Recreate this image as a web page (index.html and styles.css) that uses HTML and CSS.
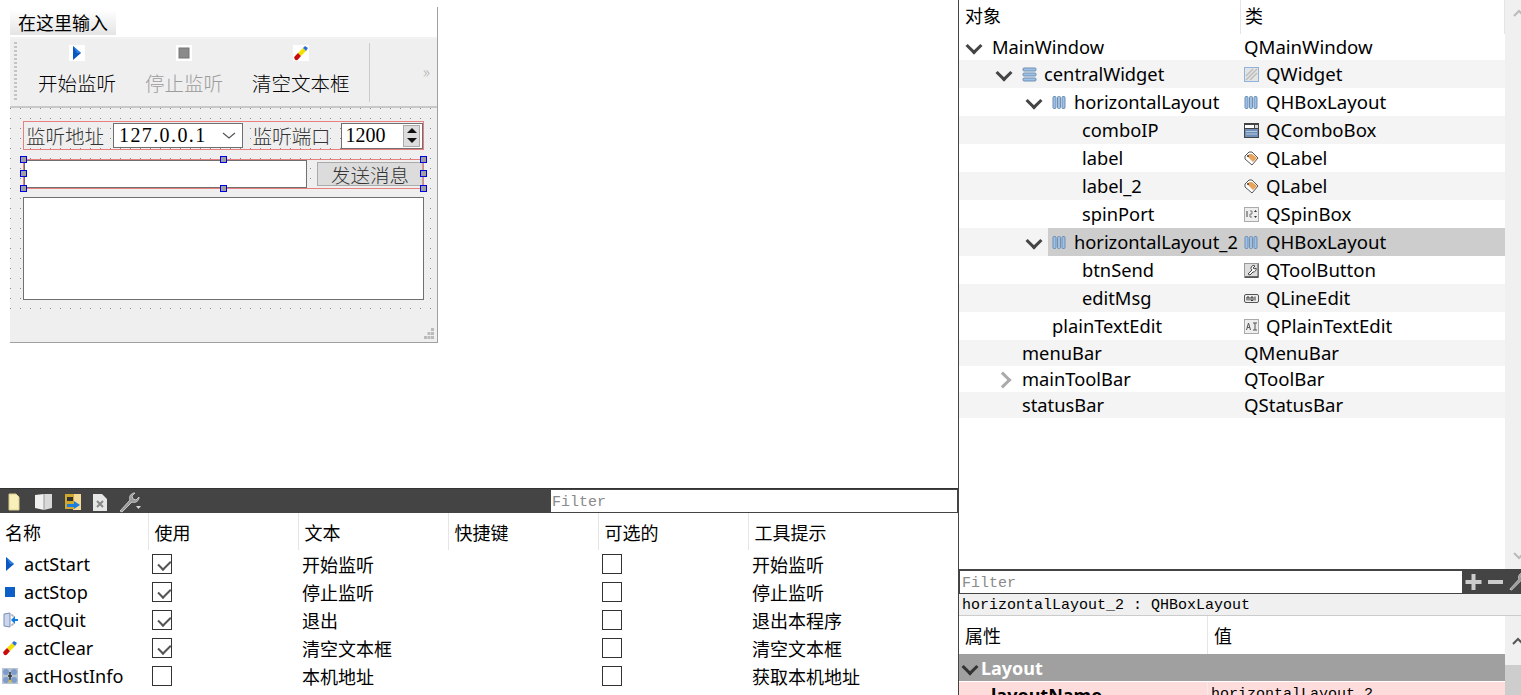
FILE: index.html
```html
<!DOCTYPE html>
<html lang="zh-CN">
<head>
    <meta charset="UTF-8">
    <title>Qt Designer</title>
    <link rel="stylesheet" href="styles.css">
</head>
<body>

<svg class="defs" width="0" height="0">
    <symbol id="i-play" viewBox="0 0 16 16"><path d="M4 1l8 7-8 7z" fill="#0b57c0"/><path d="M4 1l8 7-4 0z" fill="#2f7fe0"/></symbol>
    <symbol id="i-stop" viewBox="0 0 16 16"><rect x="3" y="3" width="10" height="10" fill="#8a8a8a" stroke="#777"/></symbol>
    <symbol id="i-stopblue" viewBox="0 0 16 16"><rect x="3" y="3" width="10" height="10" fill="#0c5fc6"/></symbol>
    <symbol id="i-eraser" viewBox="0 0 16 16"><path d="M5 8l5-5 3 3-5 5z" fill="#f2e000"/><path d="M10 3l2-2 3 2-2 3z" fill="#2f6fd8"/><path d="M2 11l3-3 3 3-3 3.500a2 2 0 0 1-3-3.500z" fill="#c80c0c"/></symbol>
    <symbol id="i-quit" viewBox="0 0 16 16"><path d="M2 2l6-1v14l-6-1z" fill="#c9d6ee" stroke="#7c8cb4"/><path d="M9 3h2v2M9 13h2v-2" fill="none" stroke="#999"/><path d="M16 7h-3V4l-4 4 4 4V9h3z" fill="#0f7ae0"/></symbol>
    <symbol id="i-host" viewBox="0 0 16 16"><rect width="16" height="16" fill="#b9c4d2"/><circle cx="4" cy="4" r="3" fill="#7d9ccc"/><circle cx="12" cy="4" r="3" fill="#7d9ccc"/><circle cx="4" cy="12" r="3" fill="#7d9ccc"/><circle cx="12" cy="12" r="3" fill="#7d9ccc"/><path d="M8 4v9M6 8h4" stroke="#333" stroke-width="1.500"/><circle cx="8" cy="13" r="1.500" fill="#d9b93a"/></symbol>
    <symbol id="i-hbox" viewBox="0 0 15 15"><g fill="#9dc0e6" stroke="#6f8fb2"><rect x="1" y="1.500" width="3" height="12" rx="1"/><rect x="5.500" y="1.500" width="3" height="12" rx="1"/><rect x="10" y="1.500" width="3" height="12" rx="1"/></g></symbol>
    <symbol id="i-vbox" viewBox="0 0 15 15"><g fill="#9dc0e6" stroke="#6f8fb2"><rect x="1" y="1" width="13" height="3" rx="1"/><rect x="1" y="6" width="13" height="3" rx="1"/><rect x="1" y="11" width="13" height="3" rx="1"/></g></symbol>
    <symbol id="i-widget" viewBox="0 0 15 15"><rect x=".5" y=".5" width="14" height="14" fill="#e4e4e4" stroke="#8fb4dc"/><path d="M2 9l7-7M2 13l11-11M6 13l7-7" stroke="#bdbdbd" stroke-width="1.500"/></symbol>
    <symbol id="i-combo" viewBox="0 0 15 15"><rect width="15" height="15" fill="#444"/><rect x="1" y="2" width="9" height="3" fill="#fff"/><rect x="11" y="2" width="3" height="3" fill="#ddd"/><rect x="1" y="6" width="13" height="8" fill="#6f8fb8"/><path d="M2 8.500h11M2 11h11" stroke="#b8c9e0"/></symbol>
    <symbol id="i-label" viewBox="0 0 15 15"><path d="M1 5l4-4h3l6 6-6 7-7-6z" fill="#fff" stroke="#555"/><path d="M5 3h3l5 4-4 4-5-5z" fill="#e8a35c"/><circle cx="4" cy="5" r="1" fill="#333"/></symbol>
    <symbol id="i-spin" viewBox="0 0 15 15"><rect x=".5" y=".5" width="14" height="14" fill="#eee" stroke="#aaa"/><path d="M3 4v6" stroke="#444"/><path d="M6 4h2v3H6v3h2" fill="none" stroke="#777"/><path d="M10 5l1.500-2L13 5zM10 9l1.500 2L13 9z" fill="#333"/></symbol>
    <symbol id="i-toolbtn" viewBox="0 0 15 15"><rect x=".5" y=".5" width="14" height="14" fill="#ddd" stroke="#999"/><path d="M13 14h1V1" stroke="#555" fill="none"/><path d="M1 14h13" stroke="#444" stroke-width="1.500"/><path d="M4 11l4-4a2.500 2.500 0 0 1 3-4L9 5l2 1 1-1a3 3 0 0 1-3 4l-3 3z" fill="#fff" stroke="#444"/></symbol>
    <symbol id="i-line" viewBox="0 0 15 15"><rect x=".5" y="3.500" width="14" height="8" rx="1.500" fill="#eee" stroke="#555"/><path d="M3 9.500V6h2v3.500M7 6v3.500h2V6H7M11 5.500v4" stroke="#333" fill="none"/></symbol>
    <symbol id="i-plain" viewBox="0 0 15 15"><rect x=".5" y=".5" width="14" height="14" fill="#eee" stroke="#aaa"/><path d="M2.500 11l2-7 2 7M3.300 8.500h2.500M9 4h4M11 4v7M9 11h4" stroke="#555" fill="none"/></symbol>
    <symbol id="i-wrench" viewBox="0 0 22 22"><path d="M2 20l10-11a5 5 0 0 1 5-7l-3 3 1 3 3 1 3-3a5 5 0 0 1-7 5L4 21z" fill="#999" stroke="#ddd" stroke-width=".8"/></symbol>
</svg>

<div class="left">
    <div class="canvas">
        <div class="form">
            <div class="menubar"><span class="menu-item">在这里输入</span></div>
            <div class="toolbar">
                <span class="grip"></span>
                <div class="tool"><svg class="tool-icon"><use href="#i-play"/></svg><span>开始监听</span></div>
                <div class="tool off"><svg class="tool-icon"><use href="#i-stop"/></svg><span>停止监听</span></div>
                <div class="tool"><svg class="tool-icon"><use href="#i-eraser"/></svg><span>清空文本框</span></div>
                <span class="tool-sep"></span>
                <span class="more">»</span>
            </div>
            <div class="central">
                <div class="lay-row">
                    <span class="lbl">监听地址</span>
                    <div class="combo"><span>127.0.0.1</span><svg width="14" height="8" viewBox="0 0 14 8"><path d="M1 1l6 5 6-5" fill="none" stroke="#555" stroke-width="1.200"/></svg></div>
                    <span class="lbl lbl2">监听端口</span>
                    <div class="spin">
                        <span>1200</span>
                        <div class="spin-btns"><i class="up"></i><i class="down"></i></div>
                    </div>
                </div>
                <div class="lay-row second">
                    <div class="edit"></div>
                    <div class="send">发送消息</div>
                    <i class="h h-tl"></i><i class="h h-tc"></i><i class="h h-tr"></i>
                    <i class="h h-ml"></i><i class="h h-mr"></i>
                    <i class="h h-bl"></i><i class="h h-bc"></i><i class="h h-br"></i>
                </div>
                <div class="plain"></div>
            </div>
            <svg class="size-grip" width="10" height="12" viewBox="0 0 10 12"><path d="M7 0h3v3H7zM3.500 4h3v3h-3zM7 4h3v3H7zM0 8h3v3H0zM3.500 8h3v3h-3zM7 8h3v3H7z" fill="#bbb"/></svg>
        </div>
    </div>

    <div class="actions">
        <div class="act-bar">
            <div class="act-tools">
                <svg class="bt" width="14" height="20" viewBox="0 0 14 20"><path d="M2 2h7l3 3v13H2z" fill="#f8f0b8" stroke="#d8cc90"/></svg>
                <svg class="bt" width="20" height="20" viewBox="0 0 20 20"><path d="M10 2h8v14l-8 2z" fill="#d8d8d8"/><path d="M1 3l9-1v16l-9-2z" fill="#f0f0f0"/><path d="M10 2v16" stroke="#999"/></svg>
                <svg class="bt" width="18" height="20" viewBox="0 0 18 20"><path d="M9 2h8v16H9z" fill="#f4dc98"/><path d="M1 2h9v15H1z" fill="#d0a830"/><rect x="3" y="5" width="6" height="4" fill="#333"/><path d="M3 12h7v-3l6 4-6 4v-2H3z" fill="#1c7fe0"/></svg>
                <svg class="bt" width="16" height="20" viewBox="0 0 16 20"><path d="M1 2h9l5 5v12H1z" fill="#e6e6e6"/><path d="M5 9l6 6M11 9l-6 6" stroke="#888" stroke-width="2"/></svg>
                <svg class="bt" width="24" height="22" viewBox="0 0 24 22"><use href="#i-wrench" width="22" height="22"/><path d="M18 15h5l-2.500 3z" fill="#ddd"/></svg>
            </div>
            <input class="filter" placeholder="Filter">
        </div>
        <table class="act-table">
            <colgroup><col class="c-first"><col class="c"><col class="c"><col class="c"><col class="c"><col></colgroup>
            <thead>
                <tr><th>名称</th><th>使用</th><th>文本</th><th>快捷键</th><th>可选的</th><th>工具提示</th></tr>
            </thead>
            <tbody>
                <tr>
                    <td><div class="act-name"><svg class="act-icon"><use href="#i-play"/></svg>actStart</div></td>
                    <td><span class="check on"></span></td><td>开始监听</td><td></td><td><span class="check"></span></td><td>开始监听</td>
                </tr>
                <tr>
                    <td><div class="act-name"><svg class="act-icon"><use href="#i-stopblue"/></svg>actStop</div></td>
                    <td><span class="check on"></span></td><td>停止监听</td><td></td><td><span class="check"></span></td><td>停止监听</td>
                </tr>
                <tr>
                    <td><div class="act-name"><svg class="act-icon"><use href="#i-quit"/></svg>actQuit</div></td>
                    <td><span class="check on"></span></td><td>退出</td><td></td><td><span class="check"></span></td><td>退出本程序</td>
                </tr>
                <tr>
                    <td><div class="act-name"><svg class="act-icon"><use href="#i-eraser"/></svg>actClear</div></td>
                    <td><span class="check on"></span></td><td>清空文本框</td><td></td><td><span class="check"></span></td><td>清空文本框</td>
                </tr>
                <tr>
                    <td><div class="act-name"><svg class="act-icon"><use href="#i-host"/></svg>actHostInfo</div></td>
                    <td><span class="check"></span></td><td>本机地址</td><td></td><td><span class="check"></span></td><td>获取本机地址</td>
                </tr>
            </tbody>
        </table>
    </div>
</div>

<div class="right">
    <div class="tree-panel">
        <div class="tree">
            <div class="tree-head"><span class="col-a">对象</span><span class="col-b">类</span></div>
            <div class="row short">
                <div class="name lv0"><i class="arrow open"></i>MainWindow</div>
                <div class="cls">QMainWindow</div>
            </div>
            <div class="row alt">
                <div class="name lv1"><i class="arrow open"></i><svg class="ico"><use href="#i-vbox"/></svg>centralWidget</div>
                <div class="cls"><svg class="ico"><use href="#i-widget"/></svg>QWidget</div>
            </div>
            <div class="row">
                <div class="name lv2"><i class="arrow open"></i><svg class="ico"><use href="#i-hbox"/></svg>horizontalLayout</div>
                <div class="cls"><svg class="ico"><use href="#i-hbox"/></svg>QHBoxLayout</div>
            </div>
            <div class="row alt">
                <div class="name lv3">comboIP</div>
                <div class="cls"><svg class="ico"><use href="#i-combo"/></svg>QComboBox</div>
            </div>
            <div class="row">
                <div class="name lv3">label</div>
                <div class="cls"><svg class="ico"><use href="#i-label"/></svg>QLabel</div>
            </div>
            <div class="row alt">
                <div class="name lv3">label_2</div>
                <div class="cls"><svg class="ico"><use href="#i-label"/></svg>QLabel</div>
            </div>
            <div class="row">
                <div class="name lv3">spinPort</div>
                <div class="cls"><svg class="ico"><use href="#i-spin"/></svg>QSpinBox</div>
            </div>
            <div class="row alt">
                <div class="name lv2"><i class="arrow open"></i><div class="hl"><svg class="ico"><use href="#i-hbox"/></svg>horizontalLayout_2</div></div>
                <div class="cls hl-cls"><svg class="ico"><use href="#i-hbox"/></svg>QHBoxLayout</div>
            </div>
            <div class="row">
                <div class="name lv3">btnSend</div>
                <div class="cls"><svg class="ico"><use href="#i-toolbtn"/></svg>QToolButton</div>
            </div>
            <div class="row alt">
                <div class="name lv3">editMsg</div>
                <div class="cls"><svg class="ico"><use href="#i-line"/></svg>QLineEdit</div>
            </div>
            <div class="row">
                <div class="name lv2b">plainTextEdit</div>
                <div class="cls"><svg class="ico"><use href="#i-plain"/></svg>QPlainTextEdit</div>
            </div>
            <div class="row alt short">
                <div class="name lv1b">menuBar</div>
                <div class="cls">QMenuBar</div>
            </div>
            <div class="row short">
                <div class="name lv1"><i class="arrow closed"></i>mainToolBar</div>
                <div class="cls">QToolBar</div>
            </div>
            <div class="row alt short">
                <div class="name lv1b">statusBar</div>
                <div class="cls">QStatusBar</div>
            </div>
        </div>
        <div class="scroll">
            <svg width="16" height="10" viewBox="0 0 16 10"><path d="M9 8l5-5 5 5" fill="none" stroke="#bbb" stroke-width="2"/></svg>
            <svg width="16" height="10" viewBox="0 0 16 10"><path d="M9 2l5 5 5-5" fill="none" stroke="#bbb" stroke-width="2"/></svg>
        </div>
    </div>

    <div class="prop-filter">
        <input class="filter" placeholder="Filter">
        <div class="prop-tools">
            <svg width="59" height="22" viewBox="0 0 59 22"><path d="M9.500 3h4v6h6v4h-6v6h-4v-6h-6V9h6z" fill="#ccc"/><rect x="26" y="9" width="15" height="4" fill="#ccc"/><use href="#i-wrench" x="46" width="20" height="20"/></svg>
        </div>
    </div>
    <div class="obj-line">horizontalLayout_2 : QHBoxLayout</div>
    <div class="props">
        <div class="prop-table">
            <div class="prop-head"><span class="p-a">属性</span><span class="p-b">值</span></div>
            <div class="prop-group"><i class="arrow open dark"></i>Layout</div>
            <div class="prop-row"><span class="p-name">layoutName</span><span class="p-val">horizontalLayout_2</span></div>
        </div>
        <div class="prop-scroll">
            <svg width="16" height="10" viewBox="0 0 16 10"><path d="M8 8l5-5 5 5" fill="none" stroke="#555" stroke-width="2"/></svg>
            <div class="thumb"></div>
        </div>
    </div>
</div>

</body>
</html>
```

FILE: styles.css
```css
* {
    box-sizing: border-box;
}

body {
    margin: 0;
    width: 1521px;
    height: 695px;
    overflow: hidden;
    display: flex;
    background: #fff;
    color: #000;
    font-family: "Noto Sans", "Noto Sans CJK SC", sans-serif;
    font-size: 18px;
}

.defs {
    position: absolute;
}

.left {
    width: 958px;
    height: 695px;
    display: flex;
    flex-direction: column;
}

.canvas {
    height: 488px;
    padding: 7px 0 0 10px;
}

/* the form being edited */
.form {
    position: relative;
    width: 428px;
    height: 336px;
    border-right: 1px solid #a0a0a0;
    border-bottom: 1px solid #a0a0a0;
    background: #efefef;
    font-family: "Noto Sans CJK SC", sans-serif;
    font-weight: 300;
    font-size: 19.500px;
}

.menubar {
    height: 32px;
    padding-top: 3px;
    background: #fff;
    border-bottom: 2px solid #f2f2f2;
}

.menu-item {
    display: block;
    width: 106px;
    height: 25px;
    padding-left: 8px;
    font-size: 18px;
    font-weight: 400;
    line-height: 25px;
    background: linear-gradient(#fff, #e4e4e4);
}

.toolbar {
    display: flex;
    height: 69px;
    padding-left: 14px;
    border-bottom: 2px solid #c8c8c8;
    background: #efefef;
}

.grip {
    width: 3px;
    height: 60px;
    margin: 3px 0 0 -10px;
    background: repeating-linear-gradient(#c4c4c4 0 2px, transparent 2px 4px);
}

.tool {
    display: flex;
    flex-direction: column;
    align-items: center;
    margin-left: 21px;
    margin-top: 6px;
}

.tool + .tool {
    margin-left: 29px;
}

.tool span {
    margin-top: 6px;
    line-height: 32px;
    white-space: nowrap;
}

.tool-icon {
    width: 16px;
    height: 16px;
    background: #fff;
}

.tool.off {
    color: #9c9c9c;
}

.tool-sep {
    width: 1px;
    height: 59px;
    margin: 4px 0 0 19px;
    background: #ccc;
}

.more {
    margin: 22px 0 0 53px;
    color: #b4b4b4;
    font-size: 17px;
    line-height: 20px;
}

.central {
    height: 205px;
    padding: 13px 13px 0;
    background-color: #efefef;
    background-image: radial-gradient(circle at 0.500px 0.500px, #8a8a8a 0.700px, transparent 0.800px);
    background-size: 10px 10px;
}

.lay-row {
    position: relative;
    display: flex;
    align-items: center;
    width: 401px;
    height: 29px;
    padding-left: 2px;
    border: 1px solid #e88080;
}

.lbl {
    width: 78px;
    color: #333;
    white-space: nowrap;
}

.lbl2 {
    margin-left: 9px;
}

.combo {
    display: flex;
    align-items: center;
    justify-content: space-between;
    width: 131px;
    height: 25px;
    margin-left: 9px;
    padding: 0 6px 0 5px;
    border: 1px solid #707070;
    background: #fff;
    font-family: "Liberation Serif", serif;
    font-weight: 400;
    font-size: 20px;
    letter-spacing: 1.400px;
}

.spin {
    display: flex;
    align-items: center;
    justify-content: space-between;
    width: 82px;
    height: 26px;
    margin-left: 11px;
    padding: 0 2px 0 3px;
    border: 1px solid #707070;
    background: #fff;
    font-family: "Liberation Serif", serif;
    font-weight: 400;
    font-size: 20px;
}

.spin-btns {
    display: flex;
    flex-direction: column;
    justify-content: space-around;
    align-items: center;
    width: 17px;
    height: 22px;
    background: #dcdcdc;
    border: 1px solid #aaa;
}

.up {
    border: 5px solid transparent;
    border-top: 0;
    border-bottom: 5px solid #111;
}

.down {
    border: 5px solid transparent;
    border-bottom: 0;
    border-top: 5px solid #111;
}

.second {
    height: 30px;
    margin-top: 9px;
    padding: 0;
}

.edit {
    width: 283px;
    height: 28px;
    border: 1px solid #707070;
    background: #fff;
}

.send {
    width: 106px;
    height: 24px;
    margin-left: 10px;
    border: 1px solid #aaa;
    background: #dcdcdc;
    color: #333;
    text-align: center;
    line-height: 23px;
    white-space: nowrap;
}

/* selection handles */
.h {
    position: absolute;
    width: 7px;
    height: 7px;
    border: 1px solid #0000e0;
    background: #a0a0a0;
}

.h-tl, .h-tc, .h-tr { top: -4px; }
.h-ml, .h-mr { top: 10px; }
.h-bl, .h-bc, .h-br { bottom: -4px; }
.h-tl, .h-ml, .h-bl { left: -4px; }
.h-tc, .h-bc { left: 196px; }
.h-tr, .h-mr, .h-br { right: -4px; }

.plain {
    width: 401px;
    height: 103px;
    margin-top: 8px;
    border: 1px solid #707070;
    background: #fff;
}

.size-grip {
    position: absolute;
    right: 3px;
    bottom: 2px;
}

/* action editor */
.actions {
    flex: 1;
    min-height: 0;
}

.act-bar {
    display: flex;
    height: 25px;
    padding: 1px 1px 0 0;
    border-top: 1px solid #333;
    background: #444;
}

.act-tools {
    display: flex;
    align-items: center;
    width: 551px;
    padding-left: 7px;
}

.bt {
    flex: none;
    margin-right: 10px;
}

.bt:first-child {
    margin-right: 13px;
}

.filter {
    flex: 1;
    min-width: 0;
    height: 22px;
    padding: 2px 1px 0;
    border: 0;
    outline: 0;
    background: #fff;
    font-family: "Liberation Mono", monospace;
    font-size: 15px;
}

.filter::placeholder {
    color: #8a8a8a;
    opacity: 1;
}

.act-table {
    width: 958px;
    table-layout: fixed;
    border-collapse: collapse;
}

.c-first {
    width: 148px;
}

.c {
    width: 150px;
}

.act-table th {
    height: 37px;
    padding: 0 0 0 6px;
    border-left: 1px solid #e5e5e5;
    font-weight: 400;
    text-align: left;
}

.act-table th:first-child {
    padding-left: 5px;
    border-left: 0;
}

.act-table td {
    height: 28px;
    padding: 0 0 0 4px;
    white-space: nowrap;
}

.act-table td:first-child {
    padding: 0;
}

.act-name {
    display: flex;
    align-items: center;
    padding-left: 2px;
    font-size: 18.100px;
}

.act-icon {
    flex: none;
    width: 16px;
    height: 16px;
    margin-right: 6px;
}

.check {
    position: relative;
    display: block;
    width: 20px;
    height: 20px;
    margin-top: -1px;
    border: 1px solid #333;
    background: #fff;
}

.check.on::after {
    content: "";
    position: absolute;
    left: 4px;
    top: 2px;
    width: 10px;
    height: 6px;
    border-left: 2px solid #555;
    border-bottom: 2px solid #555;
    transform: rotate(-45deg) translate(-1px, 3px);
}

/* object inspector */
.right {
    width: 563px;
    height: 695px;
    border-left: 1px solid #444;
    display: flex;
    flex-direction: column;
}

.tree-panel {
    display: flex;
    flex: none;
    height: 571px;
    border-bottom: 2px solid #444;
}

.tree {
    width: 546px;
}

.tree-head {
    display: flex;
    height: 34px;
    line-height: 32px;
}

.col-a {
    width: 281px;
    padding-left: 6px;
}

.col-b {
    flex: 1;
    padding-left: 4px;
    border-left: 1px solid #e5e5e5;
    border-right: 1px solid #e5e5e5;
}

.row {
    display: flex;
    height: 28px;
    line-height: 28px;
    white-space: nowrap;
}

.row.short {
    height: 26px;
    line-height: 26px;
}

.alt {
    background: #f4f4f4;
}

.name {
    display: flex;
    align-items: center;
    width: 281px;
    font-size: 18.300px;
}

.lv0 { padding-left: 7px; }
.lv1 { padding-left: 37px; }
.lv1b { padding-left: 63px; }
.lv2 { padding-left: 67px; }
.lv2b { padding-left: 93px; }
.lv3 { padding-left: 123px; }

.arrow {
    flex: none;
    position: relative;
    width: 14px;
    height: 14px;
    margin-right: 12px;
}

.arrow::after {
    content: "";
    position: absolute;
    left: 2px;
    top: 0;
    width: 9px;
    height: 9px;
    border-right: 3px solid #444;
    border-bottom: 3px solid #444;
    transform: rotate(45deg);
}

.arrow.closed::after {
    left: 1px;
    top: 2px;
    border-color: #aaa;
    transform: rotate(-45deg);
}

.ico {
    flex: none;
    width: 15px;
    height: 15px;
    margin-right: 7px;
}

.hl {
    display: flex;
    align-items: center;
    flex: 1;
    height: 100%;
    margin-left: -4px;
    padding-left: 4px;
    background: #cdcdcd;
}

.cls {
    display: flex;
    align-items: center;
    flex: 1;
    padding-left: 4px;
    font-size: 18.600px;
}

.hl-cls {
    background: #cdcdcd;
}

.scroll {
    display: flex;
    flex-direction: column;
    justify-content: space-between;
    width: 16px;
    padding: 8px 0;
    background: #f0f0f0;
    overflow: hidden;
}

.prop-filter {
    display: flex;
    flex: none;
    height: 23px;
    border-bottom: 1px solid #444;
    padding-left: 1px;
    background: #444;
}

.prop-filter .filter {
    padding-left: 2px;
}

.prop-tools {
    width: 59px;
    overflow: hidden;
}

.obj-line {
    flex: none;
    height: 22px;
    padding-left: 3px;
    border-bottom: 1px solid #ccc;
    background: #f0f0f0;
    font-family: "Liberation Mono", monospace;
    font-size: 15px;
    line-height: 24px;
    white-space: nowrap;
}

.props {
    display: flex;
    flex: 1;
    min-height: 0;
}

.prop-table {
    width: 546px;
}

.prop-head {
    display: flex;
    height: 38px;
    line-height: 40px;
}

.p-a {
    width: 249px;
    padding-left: 6px;
    border-right: 1px solid #e5e5e5;
}

.p-b {
    padding-left: 6px;
}

.prop-group {
    display: flex;
    align-items: center;
    height: 27px;
    padding-left: 3px;
    background: #a0a0a0;
    color: #fff;
    font-weight: 700;
}

.prop-group .arrow {
    margin-right: 5px;
}

.arrow.dark::after {
    border-color: #333;
}

.prop-row {
    display: flex;
    height: 28px;
    margin-top: 1px;
    line-height: 26px;
    background: #ffdcdc;
}

.p-name {
    width: 249px;
    padding-left: 32px;
    border-right: 1px solid #eee;
    font-weight: 700;
}

.p-val {
    padding-left: 3px;
    font-family: "Liberation Mono", monospace;
    font-size: 15px;
}

.prop-scroll {
    width: 16px;
    padding-top: 11px;
    background: #f0f0f0;
}

.thumb {
    height: 60px;
    margin-top: 14px;
    background: #cdcdcd;
}
```
